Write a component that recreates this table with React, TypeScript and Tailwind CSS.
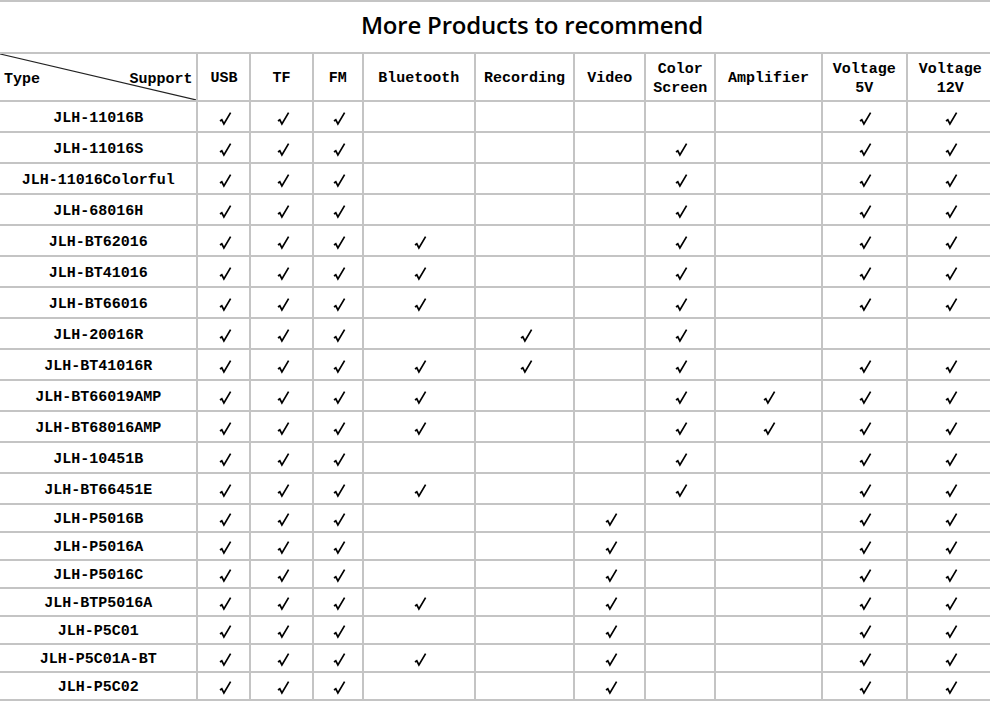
const columns = [
  { label: ["USB"], w: 53 },
  { label: ["TF"], w: 62 },
  { label: ["FM"], w: 50 },
  { label: ["Bluetooth"], w: 112 },
  { label: ["Recording"], w: 99 },
  { label: ["Video"], w: 71 },
  { label: ["Color", "Screen"], w: 70 },
  { label: ["Amplifier"], w: 106 },
  { label: ["Voltage", "5V"], w: 85 },
  { label: ["Voltage", "12V"], w: 86 },
];

// flags: USB TF FM BT REC VIDEO COLOR AMP 5V 12V
const products: { name: string; f: string }[] = [
  { name: "JLH-11016B", f: "1110000011" },
  { name: "JLH-11016S", f: "1110001011" },
  { name: "JLH-11016Colorful", f: "1110001011" },
  { name: "JLH-68016H", f: "1110001011" },
  { name: "JLH-BT62016", f: "1111001011" },
  { name: "JLH-BT41016", f: "1111001011" },
  { name: "JLH-BT66016", f: "1111001011" },
  { name: "JLH-20016R", f: "1110101000" },
  { name: "JLH-BT41016R", f: "1111101011" },
  { name: "JLH-BT66019AMP", f: "1111001111" },
  { name: "JLH-BT68016AMP", f: "1111001111" },
  { name: "JLH-10451B", f: "1110001011" },
  { name: "JLH-BT66451E", f: "1111001011" },
  { name: "JLH-P5016B", f: "1110010011" },
  { name: "JLH-P5016A", f: "1110010011" },
  { name: "JLH-P5016C", f: "1110010011" },
  { name: "JLH-BTP5016A", f: "1111010011" },
  { name: "JLH-P5C01", f: "1110010011" },
  { name: "JLH-P5C01A-BT", f: "1111010011" },
  { name: "JLH-P5C02", f: "1110010011" },
];

function Check() {
  return (
    <svg width="13" height="15" viewBox="0 0 13 15" className="inline-block ml-[3px] mt-[3px]">
      <path d="M1 10 L2.8 8.8 L4.9 13 L11.6 1.6" fill="none" stroke="#000" strokeWidth="1.7" strokeLinejoin="miter" />
    </svg>
  );
}

export default function App() {
  return (
    <div className="w-[990px] h-[703px] overflow-hidden bg-white text-black">
      {/* title */}
      <div className="h-[52px] border-t-2 border-[#c4c4c4] flex items-center justify-center">
        <h1 className="font-['Open_Sans',sans-serif] font-semibold text-[24px] tracking-[-0.2px] ml-[74px] mt-[-5px]">
          More Products to recommend
        </h1>
      </div>

      {/* product table */}
      <table className="table-fixed border-collapse w-[993px] font-['Liberation_Mono','Noto_Sans_CJK_SC',monospace] font-bold text-[15px] leading-[19px]">
        <colgroup>
          <col className="w-[197px]" />
          {columns.map((c, i) => (
            <col key={i} style={{ width: c.w }} />
          ))}
        </colgroup>
        <thead>
          <tr className="h-[48px]">
            <th className="relative border-2 border-l-0 border-[#c4c4c4] p-0 font-bold">
              <svg className="absolute inset-0 w-full h-full" viewBox="0 0 100 100" preserveAspectRatio="none">
                <line x1="0" y1="0" x2="100" y2="100" stroke="#222" strokeWidth="1.2" vectorEffect="non-scaling-stroke" />
              </svg>
              <div className="flex justify-between px-[4px] pt-[5px]">
                <span>Type</span>
                <span>Support</span>
              </div>
            </th>
            {columns.map((c, i) => (
              <th key={i} className={"border-2 border-[#c4c4c4] p-0 pt-[3px] text-center font-bold" + (i === columns.length - 1 ? " border-r-0" : "")}>
                {c.label.map((l) => (
                  <div key={l}>{l}</div>
                ))}
              </th>
            ))}
          </tr>
        </thead>
        <tbody>
          {products.map((p, r) => (
            <tr key={p.name} className={r < 13 ? "h-[31px]" : "h-[28px]"}>
              <td className="border-2 border-l-0 border-[#c4c4c4] p-0 pt-[3px] text-center">{p.name}</td>
              {p.f.split("").map((v, i) => (
                <td key={i} className={"border-2 border-[#c4c4c4] p-0 text-center align-middle leading-none" + (i === 9 ? " border-r-0" : "")}>
                  {v === "1" ? <Check /> : null}
                </td>
              ))}
            </tr>
          ))}
        </tbody>
      </table>
    </div>
  );
}
